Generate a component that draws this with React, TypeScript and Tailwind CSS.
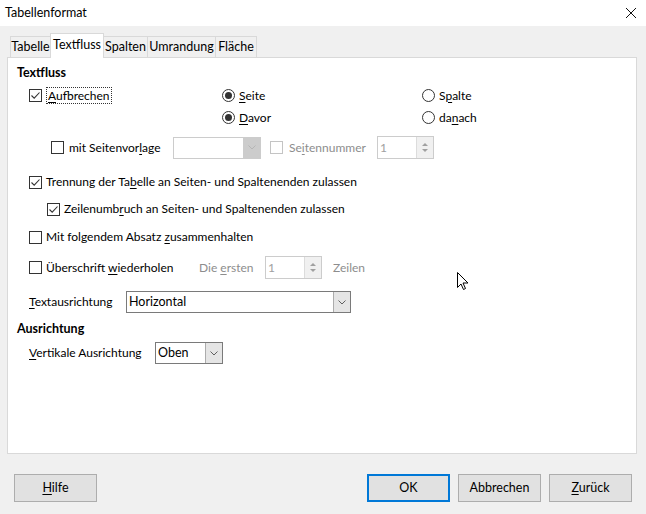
import type { ReactNode } from "react";

const font = "font-['Lato',sans-serif]";

function Check({ checked = false, disabled = false }: { checked?: boolean; disabled?: boolean }) {
  return (
    <span
      className={`w-[13px] h-[13px] shrink-0 border bg-white flex items-center justify-center ${
        disabled ? "border-[#c4c4c4]" : "border-[#333333]"
      }`}
    >
      {checked && (
        <svg width="11" height="11" viewBox="0 0 11 11">
          <path d="M1.5 5.5 L4.2 8.2 L9.5 2.5" fill="none" stroke="#333333" strokeWidth="1.1" />
        </svg>
      )}
    </span>
  );
}

function Radio({ checked = false }: { checked?: boolean }) {
  return (
    <span className="w-[13px] h-[13px] shrink-0 rounded-full border border-[#333333] bg-white flex items-center justify-center">
      {checked && <span className="w-[7px] h-[7px] rounded-full bg-[#333333]" />}
    </span>
  );
}

function Chevron({ color = "#606060" }: { color?: string }) {
  return (
    <svg width="8" height="5" viewBox="0 0 8 5">
      <path d="M0.5 0.5 L4 4 L7.5 0.5" fill="none" stroke={color} strokeWidth="1" />
    </svg>
  );
}

function Select({ width, value, disabled = false }: { width: string; value: string; disabled?: boolean }) {
  return (
    <div
      className={`${width} h-[22px] flex border ${
        disabled ? "border-[#cccccc] bg-white" : "border-[#7a7a7a] bg-white"
      }`}
    >
      <div className="flex-1 flex items-center pl-[2px] text-[12.5px] text-black">{value}</div>
      <div
        className={`w-[17px] flex items-center justify-center border-l ${
          disabled ? "bg-[#cccccc] border-[#cccccc]" : "bg-[#e5e5e5] border-[#acacac]"
        }`}
      >
        <Chevron color={disabled ? "#b5b5b5" : "#606060"} />
      </div>
    </div>
  );
}

function Spin({ value }: { value: string }) {
  return (
    <div className="w-[57px] h-[23px] flex border border-[#cccccc] bg-white">
      <div className="flex-1 flex items-center pl-[2px] text-[#a0a0a0]">{value}</div>
      <div className="w-[17px] flex flex-col items-center justify-center gap-[3px] bg-[#f0f0f0] border-l border-[#dcdcdc]">
        <svg width="6" height="3" viewBox="0 0 6 3">
          <path d="M0 3 L3 0 L6 3 Z" fill="#a0a0a0" />
        </svg>
        <svg width="6" height="3" viewBox="0 0 6 3">
          <path d="M0 0 L3 3 L6 0 Z" fill="#a0a0a0" />
        </svg>
      </div>
    </div>
  );
}

function U({ children }: { children: ReactNode }) {
  return <span className="underline underline-offset-[2px] decoration-1">{children}</span>;
}

function Button({ children, primary = false }: { children: ReactNode; primary?: boolean }) {
  return (
    <button
      className={`w-[83px] h-[28px] bg-[#e1e1e1] text-black flex items-center justify-center ${
        primary ? "border-2 border-[#0078d7]" : "border border-[#adadad]"
      }`}
    >
      {children}
    </button>
  );
}

const tabs = [
  { label: "Tabelle", w: "w-[41px]" },
  { label: "Textfluss", w: "w-[54px]", active: true },
  { label: "Spalten", w: "w-[45px]" },
  { label: "Umrandung", w: "w-[69px]" },
  { label: "Fläche", w: "w-[42px]" },
];

export default function App() {
  return (
    <div className={`relative w-[646px] h-[514px] bg-[#f0f0f0] flex flex-col text-[12px] text-black ${font}`}>
      {/* title bar */}
      <div className="h-[26px] bg-white flex items-center justify-between pl-[5px] pr-[9px]">
        <span className="text-[12.5px]">Tabellenformat</span>
        <svg width="12" height="12" viewBox="0 0 12 12">
          <path d="M1 1 L11 11 M11 1 L1 11" stroke="#111111" strokeWidth="1" />
        </svg>
      </div>

      {/* tabs */}
      <div className="h-[31px] flex items-end pl-[10px] text-[12.5px]">
        {tabs.map((t) =>
          t.active ? (
            <div
              key={t.label}
              className={`${t.w} h-[25px] bg-white border border-b-0 border-[#d9d9d9] flex items-center justify-center -mb-[1px] -ml-[1px] relative z-10 pb-[2px]`}
            >
              {t.label}
            </div>
          ) : (
            <div
              key={t.label}
              className={`${t.w} h-[21px] bg-[#f0f0f0] border border-b-0 border-[#d9d9d9] flex items-center justify-center -ml-[1px] first:ml-0`}
            >
              {t.label}
            </div>
          )
        )}
      </div>

      {/* panel */}
      <div className="ml-[7px] w-[630px] h-[397px] bg-white border border-[#d9d9d9] flex flex-col pl-[9px]">
        <div className="h-[16px] mt-[7px] flex items-center font-bold text-[12.5px]">Textfluss</div>

        <div className="mt-[3px] flex">
          <div className="w-[205px] pl-[12px] flex flex-col">
            <div className="h-[23px] flex items-center gap-[4px]">
              <Check checked />
              <span className="px-[1px] border border-dotted border-[#333333] leading-[15px]">
                <U>A</U>ufbrechen
              </span>
            </div>
          </div>
          <div className="w-[200px] flex flex-col">
            <div className="h-[23px] flex items-center gap-[4px]">
              <Radio checked />
              <span>
                <U>S</U>eite
              </span>
            </div>
            <div className="h-[21px] flex items-center gap-[4px]">
              <Radio checked />
              <span>
                <U>D</U>avor
              </span>
            </div>
          </div>
          <div className="flex flex-col">
            <div className="h-[23px] flex items-center gap-[4px]">
              <Radio />
              <span>
                S<U>p</U>alte
              </span>
            </div>
            <div className="h-[21px] flex items-center gap-[4px]">
              <Radio />
              <span>
                da<U>n</U>ach
              </span>
            </div>
          </div>
        </div>

        <div className="mt-[8px] h-[23px] flex items-center pl-[34px]">
          <Check />
          <span className="ml-[5px] w-[104px]">
            mit Seitenvor<U>l</U>age
          </span>
          <Select width="w-[88px]" value="" disabled />
          <span className="ml-[9px]">
            <Check disabled />
          </span>
          <span className="ml-[6px] w-[88px] text-[#8d8d8d]">
            Se<U>i</U>tennummer
          </span>
          <Spin value="1" />
        </div>

        <div className="mt-[13px] h-[20px] flex items-center gap-[4px] pl-[12px]">
          <Check checked />
          <span>
            Trennung der Ta<U>b</U>elle an Seiten- und Spaltenenden zulassen
          </span>
        </div>

        <div className="mt-[7px] h-[20px] flex items-center gap-[4px] pl-[30px]">
          <Check checked />
          <span>
            Zeilenumb<U>r</U>uch an Seiten- und Spaltenenden zulassen
          </span>
        </div>

        <div className="mt-[8px] h-[20px] flex items-center gap-[4px] pl-[12px]">
          <Check />
          <span>
            Mit folgendem Absatz <U>z</U>usammenhalten
          </span>
        </div>

        <div className="mt-[9px] h-[23px] flex items-center pl-[12px]">
          <Check />
          <span className="ml-[4px] w-[153px]">
            Überschrift <U>w</U>iederholen
          </span>
          <span className="w-[66px] text-[#8d8d8d]">
            Die <U>e</U>rsten
          </span>
          <Spin value="1" />
          <span className="ml-[11px] text-[#8d8d8d]">Zeilen</span>
        </div>

        <div className="mt-[12px] h-[22px] flex items-center pl-[12px]">
          <span className="w-[97px]">
            <U>T</U>extausrichtung
          </span>
          <Select width="w-[225px]" value="Horizontal" />
        </div>

        <div className="mt-[8px] h-[16px] flex items-center font-bold text-[12.5px]">Ausrichtung</div>

        <div className="mt-[5px] h-[22px] flex items-center pl-[12px]">
          <span className="w-[126px]">
            <U>V</U>ertikale Ausrichtung
          </span>
          <Select width="w-[68px]" value="Oben" />
        </div>
      </div>

      {/* buttons */}
      <div className="mt-[20px] flex px-[14px] text-[12.5px]">
        <Button>
          <span>
            <U>H</U>ilfe
          </span>
        </Button>
        <div className="flex-1" />
        <div className="flex gap-[8px]">
          <Button primary>OK</Button>
          <Button>Abbrechen</Button>
          <Button>
            <span>
              <U>Z</U>urück
            </span>
          </Button>
        </div>
      </div>

      {/* mouse pointer */}
      <svg className="absolute left-[457px] top-[272px]" width="12" height="19" viewBox="0 0 12 19">
        <path
          d="M0.5 0.5 L0.5 15.5 L4 12 L6.5 17.5 L8.5 16.5 L6 11 L11 11 Z"
          fill="#ffffff"
          stroke="#000000"
          strokeWidth="1"
          strokeLinejoin="miter"
        />
      </svg>
    </div>
  );
}
